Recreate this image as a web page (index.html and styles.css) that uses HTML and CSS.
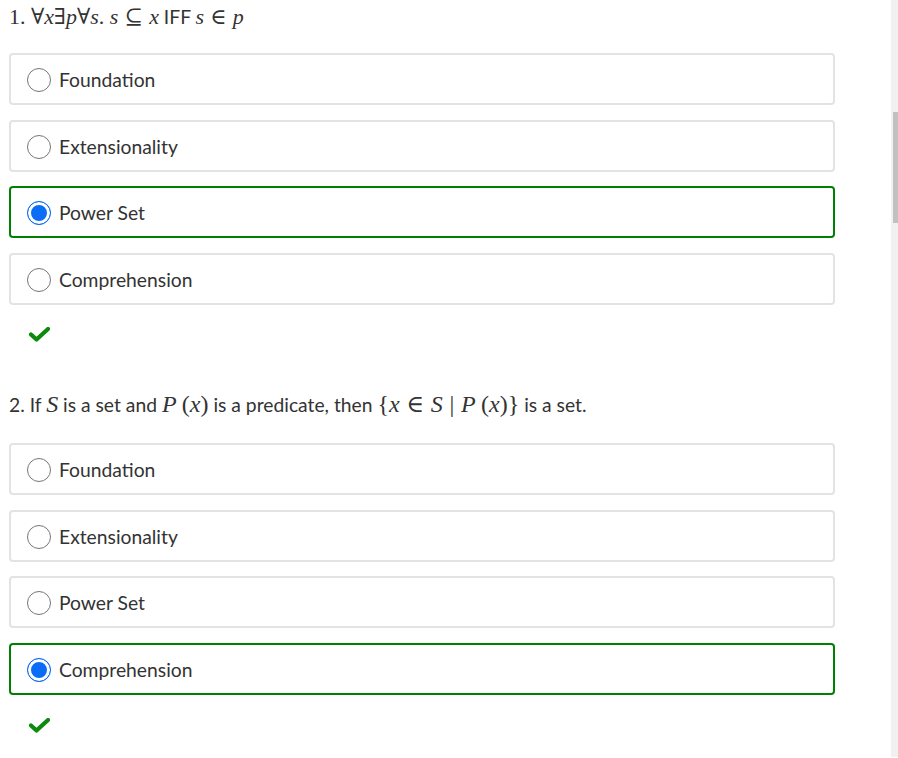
FILE: index.html
```html
<!DOCTYPE html>
<html>
<head>
<meta charset="utf-8">
<link rel="stylesheet" href="styles.css">
</head>
<body>
<div class="page">
  <main class="content">
    <section class="question q1">
      <p class="prompt"><span class="math">1. ∀<i>x</i>∃<i>p</i>∀<i>s</i>. <i>s</i><span class="rel">⊆</span><i>x</i></span> IFF <span class="math"><i>s</i><span class="rel">∈</span><i>p</i></span></p>
      <div class="options">
        <label class="option"><span class="radio"></span><span class="label">Foundation</span></label>
        <label class="option"><span class="radio"></span><span class="label">Extensionality</span></label>
        <label class="option selected"><span class="radio"></span><span class="label">Power Set</span></label>
        <label class="option"><span class="radio"></span><span class="label">Comprehension</span></label>
      </div>
      <div class="check"><svg width="21" height="15" viewBox="0 0 21 15"><path d="M2 7.5 L7.5 12.5 L19 2" fill="none" stroke="#0b8a0b" stroke-width="4.2" stroke-linecap="round" stroke-linejoin="round"/></svg></div>
    </section>
    <section class="question q2">
      <p class="prompt">2. If <span class="math"><i>S</i></span> is a set and <span class="math"><i>P</i><span class="paren">(<i>x</i>)</span></span> is a predicate, then <span class="math">{<i>x</i><span class="rel">∈</span><i>S</i><span class="rel">|</span><i>P</i><span class="paren">(<i>x</i>)</span>}</span> is a set.</p>
      <div class="options">
        <label class="option"><span class="radio"></span><span class="label">Foundation</span></label>
        <label class="option"><span class="radio"></span><span class="label">Extensionality</span></label>
        <label class="option"><span class="radio"></span><span class="label">Power Set</span></label>
        <label class="option selected"><span class="radio"></span><span class="label">Comprehension</span></label>
      </div>
      <div class="check"><svg width="21" height="15" viewBox="0 0 21 15"><path d="M2 7.5 L7.5 12.5 L19 2" fill="none" stroke="#0b8a0b" stroke-width="4.2" stroke-linecap="round" stroke-linejoin="round"/></svg></div>
    </section>
  </main>
  <div class="scrollbar"><div class="thumb"></div></div>
</div>
</body>
</html>
```
FILE: styles.css
```css
html, body {
  margin: 0;
  padding: 0;
  background: #fff;
}
body {
  font-family: Lato, "Open Sans", sans-serif;
  color: #333;
  font-size: 19.3px;
}
.page {
  display: flex;
  height: 758px;
  overflow: hidden;
}
.content {
  flex: 1;
  padding-left: 9px;
}
.scrollbar {
  width: 7px;
  height: 757px;
  background: #f1f1f1;
  display: flex;
  flex-direction: column;
  align-items: flex-end;
}
.thumb {
  width: 5px;
  height: 111px;
  margin-top: 112px;
  background: #c1c1c1;
}
.prompt {
  margin: 0;
  line-height: 24px;
  height: 24px;
  white-space: nowrap;
}
.q1 .prompt { padding-top: 5px; }
.q2 .prompt { margin-top: 50px; }
.math {
  font-family: "Liberation Serif", "DejaVu Serif", serif;
  font-size: 22px;
}
.q2 .math { font-size: 24px; }
.math i { font-style: italic; }
.rel { margin: 0 0.28em; }
.paren { margin-left: 0.22em; }
.options {
  width: 826px;
  display: flex;
  flex-direction: column;
  gap: 14.67px;
}
.q1 .options { margin-top: 24px; }
.q2 .options { margin-top: 27px; }
.option {
  box-sizing: border-box;
  height: 52px;
  border: 2px solid #e3e3e3;
  border-radius: 4px;
  display: flex;
  align-items: center;
  padding-left: 16px;
  padding-top: 2px;
}
.option.selected { border-color: #008000; }
.radio {
  box-sizing: border-box;
  width: 24px;
  height: 24px;
  border-radius: 50%;
  border: 1px solid #767676;
  background: #fff;
  flex: none;
}
.selected .radio {
  border: 1.2px solid #0b6cf5;
  background: #0b6cf5;
  box-shadow: inset 0 0 0 3px #fff;
}
.label {
  margin-left: 8px;
  line-height: 24px;
}
.check {
  margin-top: 22px;
  padding-left: 20px;
  height: 15px;
}
.check svg { display: block; }
.q2 .check { margin-top: 23px; }
```
